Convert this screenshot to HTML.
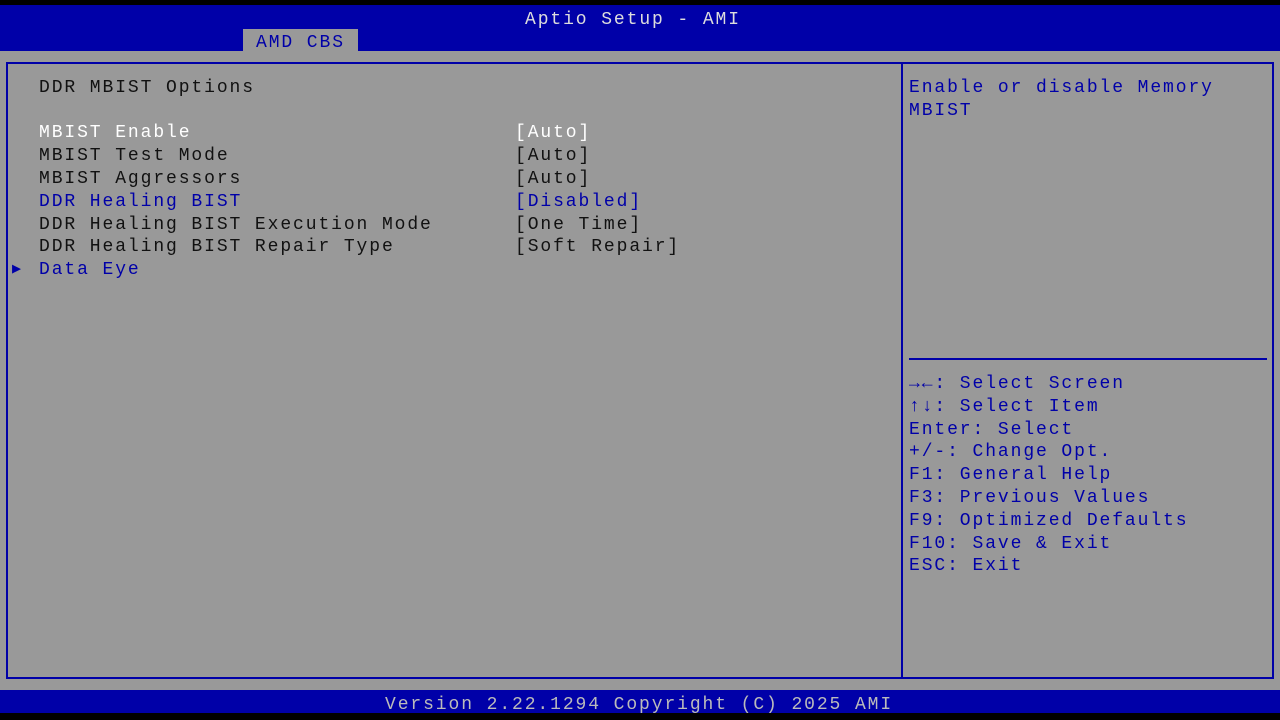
<!DOCTYPE html>
<html><head><style>
body{margin:0;width:1280px;height:720px;background:#000;position:relative;overflow:hidden;font-family:"Liberation Mono",monospace;font-size:18px;letter-spacing:1.9px}
div{position:absolute;white-space:pre;line-height:22.8px}
.t{transform:translateY(-9px)}
</style></head><body>
<div style="left:0;top:5px;width:1280px;height:46px;background:#0000a8"></div>
<div style="left:0;top:51px;width:1280px;height:639px;background:#999"></div>
<div style="left:243px;top:29px;width:115px;height:22px;background:#999"></div>
<div style="left:6px;top:62px;width:1264px;height:613px;border:2px solid #0000a8"></div>
<div style="left:901px;top:62px;width:2px;height:617px;background:#0000a8"></div>
<div style="left:909px;top:358px;width:358px;height:2px;background:#0000a8"></div>
<div style="left:0;top:690px;width:1280px;height:23px;background:#0000a8"></div>
<div class="t" style="left:525px;top:18px;color:#ddd">Aptio Setup - AMI</div>
<div class="t" style="left:256px;top:41px;color:#0000a8">AMD CBS</div>
<div class="t" style="left:39px;top:86px;color:#111">DDR MBIST Options</div>
<div class="t" style="left:39px;top:131px;color:#fff">MBIST Enable</div>
<div class="t" style="left:515px;top:131px;color:#fff">[Auto]</div>
<div class="t" style="left:39px;top:154px;color:#111">MBIST Test Mode</div>
<div class="t" style="left:515px;top:154px;color:#111">[Auto]</div>
<div class="t" style="left:39px;top:177px;color:#111">MBIST Aggressors</div>
<div class="t" style="left:515px;top:177px;color:#111">[Auto]</div>
<div class="t" style="left:39px;top:200px;color:#0000a8">DDR Healing BIST</div>
<div class="t" style="left:515px;top:200px;color:#0000a8">[Disabled]</div>
<div class="t" style="left:39px;top:223px;color:#111">DDR Healing BIST Execution Mode</div>
<div class="t" style="left:515px;top:223px;color:#111">[One Time]</div>
<div class="t" style="left:39px;top:245px;color:#111">DDR Healing BIST Repair Type</div>
<div class="t" style="left:515px;top:245px;color:#111">[Soft Repair]</div>
<div class="t" style="left:12px;top:268px;color:#0000a8;font-size:15px">&#9654;</div>
<div class="t" style="left:39px;top:268px;color:#0000a8">Data Eye</div>
<div class="t" style="left:909px;top:86px;color:#0000a8">Enable or disable Memory</div>
<div class="t" style="left:909px;top:109px;color:#0000a8">MBIST</div>
<div style="left:909px;top:373px;color:#0000a8"><b>&#8594;&#8592;</b>: Select Screen
<b>&#8593;&#8595;</b>: Select Item
Enter: Select
+/-: Change Opt.
F1: General Help
F3: Previous Values
F9: Optimized Defaults
F10: Save &amp; Exit
ESC: Exit</div>
<div class="t" style="left:385px;top:703px;color:#bbb">Version 2.22.1294 Copyright (C) 2025 AMI</div>
</body></html>
